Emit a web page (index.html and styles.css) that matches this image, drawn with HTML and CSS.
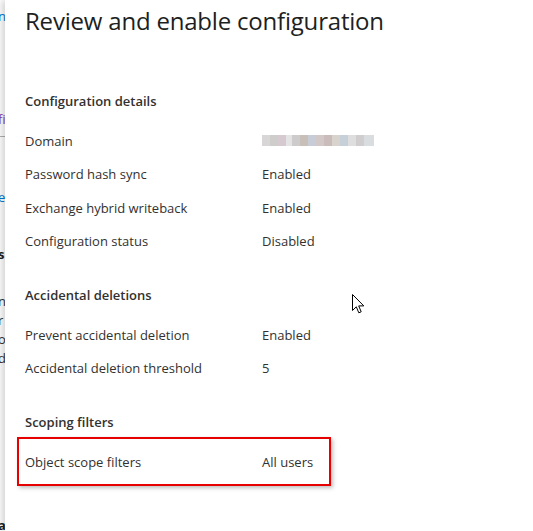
FILE: index.html
```html
<!DOCTYPE html>
<html>
<head>
    <meta charset="UTF-8">
    <title>Review and enable configuration</title>
    <link rel="stylesheet" href="styles.css">
</head>
<body>
    <div class="page">
        <div class="behind">
            <p class="frag link" style="margin-top: 8px">n:</p>
            <p class="frag accent" style="margin-top: 86px">fi</p>
            <div class="rule"></div>
            <p class="frag link" style="margin-top: 52px">el</p>
            <p class="frag strong" style="margin-top: 40px">s</p>
            <p class="frag" style="margin-top: 30px">n</p>
            <p class="frag" style="margin-top: 2px">r</p>
            <p class="frag" style="margin-top: 2px">o</p>
            <p class="frag" style="margin-top: 2px">d</p>
            <p class="frag strong" style="margin-top: 150px">a</p>
            <p class="frag" style="margin-top: 30px">t</p>
            <p class="frag" style="margin-top: 6px">c</p>
        </div>

        <div class="panel">
            <h1 class="title">Review and enable configuration</h1>

            <section class="group">
                <h2 class="group-title">Configuration details</h2>
                <div class="row">
                    <span class="label">Domain</span>
                    <span class="value"><span class="blur"></span></span>
                </div>
                <div class="row">
                    <span class="label">Password hash sync</span>
                    <span class="value">Enabled</span>
                </div>
                <div class="row">
                    <span class="label">Exchange hybrid writeback</span>
                    <span class="value">Enabled</span>
                </div>
                <div class="row">
                    <span class="label">Configuration status</span>
                    <span class="value">Disabled</span>
                </div>
            </section>

            <section class="group">
                <h2 class="group-title">Accidental deletions</h2>
                <div class="row">
                    <span class="label">Prevent accidental deletion</span>
                    <span class="value">Enabled</span>
                </div>
                <div class="row">
                    <span class="label">Accidental deletion threshold</span>
                    <span class="value">5</span>
                </div>
            </section>

            <section class="group">
                <h2 class="group-title">Scoping filters</h2>
                <div class="row marked">
                    <span class="label">Object scope filters</span>
                    <span class="value">All users</span>
                </div>
            </section>

            <svg class="cursor" width="13" height="21" viewBox="0 0 13 21">
                <path d="M0.5 0.5 L0.5 16.5 L4.3 12.8 L6.8 18.8 L9.2 17.8 L6.7 11.9 L11.8 11.9 Z" fill="#ffffff" stroke="#000000" stroke-width="1"/>
            </svg>
        </div>
    </div>
</body>
</html>
```

FILE: styles.css
```css
html, body, h1, h2, p, section {
    margin: 0;
    padding: 0;
}
body {
    background-color: #ffffff;
    font-family: "Open Sans", "Noto Sans", sans-serif;
    color: #323130;
}
.page {
    position: relative;
    width: 533px;
    height: 531px;
    overflow: hidden;
}
.behind {
    width: 12px;
    height: 531px;
    background-color: #ffffff;
}
.behind .frag {
    margin-left: -2px;
    white-space: nowrap;
    font-size: 13px;
    line-height: 17px;
    color: #323130;
}
.behind .link {
    color: #0078d4;
}
.behind .accent {
    color: #8a3bb3;
}
.behind .strong {
    font-weight: 700;
    color: #201f1e;
}
.behind .rule {
    margin-top: 8px;
    width: 5px;
    height: 1px;
    background-color: #b0b0b0;
}
.panel {
    position: absolute;
    top: 0;
    left: 5px;
    right: 0;
    bottom: 0;
    background-color: #ffffff;
    box-shadow: -3px 0 7px rgba(0, 0, 0, 0.18);
    padding: 5px 0 0 20px;
}
.title {
    font-size: 24px;
    line-height: 32px;
    font-weight: 400;
    color: #201f1e;
    letter-spacing: -0.2px;
}
.group {
    margin-top: 54px;
}
.group + .group {
    margin-top: 27px;
}
.group-title {
    font-size: 13px;
    line-height: 20px;
    font-weight: 600;
    color: #323130;
    margin-bottom: 13px;
}
.row {
    display: flex;
    align-items: center;
    height: 33.5px;
    font-size: 13px;
}
.label {
    width: 237px;
}
.value {
    display: flex;
    align-items: center;
}
.blur {
    display: block;
    width: 112px;
    height: 11px;
    background:
        linear-gradient(90deg,
            #d8d6d6 0 8px, #cfcccc 8px 16px, #d6c9cf 16px 24px, #e4e4e4 24px 30px,
            #cdcbcb 30px 38px, #c8c0b8 38px 46px, #c8ccd6 46px 54px, #d3c8c8 54px 62px,
            #cbbcbc 62px 70px, #d8d3cc 70px 78px, #c7cfd8 78px 86px, #dedede 86px 94px,
            #cfcdcd 94px 102px, #d9dde0 102px 112px);
}
.marked {
    height: 49px;
    width: 314px;
    margin: -8px 0 0 -8px;
    padding-left: 6px;
    box-sizing: border-box;
    border: 2px solid #e60000;
    box-shadow: 2px 2px 4px rgba(0, 0, 0, 0.25);
}
.cursor {
    position: absolute;
    left: 347px;
    top: 294px;
}
```
